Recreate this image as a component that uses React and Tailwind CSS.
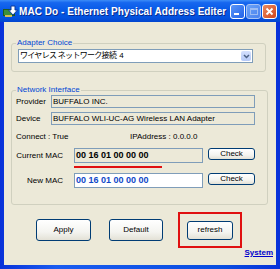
import React from 'react';

const btn =
  'flex items-center justify-center rounded-[3px] border border-[#003C74] bg-[linear-gradient(to_bottom,#ffffff_0%,#f4f4f0_60%,#e3e1d6_100%)] text-[8px] text-black leading-none';

function TitleIcon() {
  return (
    <svg width="15" height="13" viewBox="0 0 15 13">
      <rect x="0.5" y="4.5" width="11" height="6" fill="#3c8f3c" stroke="#1e5a1e" />
      <rect x="2" y="10" width="7" height="2" fill="#d8c050" />
      <path d="M8 1h4v4h2.5l-4.5 5-4.5-5H8z" fill="#ffffff" stroke="#0b3a9c" strokeWidth="1" />
    </svg>
  );
}

function Chevron() {
  return (
    <svg width="7" height="5" viewBox="0 0 7 5">
      <path d="M1 1l2.5 2.5L6 1" fill="none" stroke="#4d6185" strokeWidth="1.5" />
    </svg>
  );
}

export default function App() {
  return (
    <div className="w-[280px] h-[269px] flex flex-col bg-[linear-gradient(to_right,#0831d9,#1a5cf0_20%,#0a4ee0_80%,#0831d9)] font-['Liberation_Sans','Noto_Sans_CJK_JP',sans-serif] overflow-hidden">
      {/* Title bar */}
      <div className="h-[22px] flex items-center pl-[3px] pr-[3px] bg-[linear-gradient(to_bottom,#3d8df7_0%,#1767ef_12%,#0558e6_50%,#0452df_80%,#0345cf_100%)]">
        <TitleIcon />
        <span className="ml-[1px] text-[10px] font-bold text-white tracking-[0.05px] [text-shadow:1px_1px_0_#0a2a8a] whitespace-nowrap">
          MAC Do - Ethernet Physical Address Editer
        </span>
        <div className="ml-auto flex gap-[1px]">
          <div className="w-[15px] h-[15px] rounded-[3px] border border-white bg-[linear-gradient(135deg,#5a96f8,#2263e8)] flex items-end pl-[3px] pb-[3px]">
            <div className="w-[5px] h-[2px] bg-white" />
          </div>
          <div className="w-[15px] h-[15px] rounded-[3px] border border-[#a9c4f5] bg-[linear-gradient(135deg,#6aa2f7,#4a82ee)] flex items-center justify-center">
            <div className="w-[8px] h-[7px] border border-[#9dbcf3] border-t-2" />
          </div>
          <div className="w-[15px] h-[15px] rounded-[3px] border border-white bg-[linear-gradient(135deg,#e98a5f,#d2461c)] flex items-center justify-center">
            <svg width="9" height="9" viewBox="0 0 9 9">
              <path d="M1.5 1.5l6 6M7.5 1.5l-6 6" stroke="#ffffff" strokeWidth="1.8" />
            </svg>
          </div>
        </div>
      </div>

      {/* Client area */}
      <div className="flex-1 mx-[4px] mb-[4px] bg-[#ECE9D8] flex flex-col text-[8px] text-black">
        {/* Adapter Choice */}
        <fieldset className="mt-[16px] ml-[7px] mr-[10px] border border-[#D0D0BF] rounded-[3px] pl-[6px] pr-[12px] pb-[8px]">
          <legend className="ml-[-2px] px-[1px] leading-[10px] text-[8px] text-[#0046D5]">Adapter Choice</legend>
          <div className="mt-[1px] h-[14px] flex items-stretch border border-[#7F9DB9] bg-white">
            <span className="flex-1 pl-[1px] leading-[12px] text-[8px] tracking-[-0.7px] whitespace-pre">
              ワイヤレス ネットワーク接続  4
            </span>
            <div className="w-[10px] m-px rounded-[2px] bg-[linear-gradient(to_bottom,#d4e0fd,#b5c9f7)] flex items-center justify-center">
              <Chevron />
            </div>
          </div>
        </fieldset>

        {/* Network Interface */}
        <fieldset className="mt-[13px] ml-[7px] mr-[9px] border border-[#D0D0BF] rounded-[3px] pl-[4px] pr-[12px] pb-[16px]">
          <legend className="px-[1px] leading-[10px] text-[8px] text-[#0046D5]">Network Interface</legend>
          <div className="flex items-center h-[13px]">
            <span className="w-[35px]">Provider</span>
            <div className="flex-1 h-full border border-[#7F9DB9] bg-[#ECE9D8] pl-[1px] leading-[11px]">BUFFALO INC.</div>
          </div>
          <div className="mt-[4px] flex items-center h-[13px]">
            <span className="w-[35px]">Device</span>
            <div className="flex-1 h-full border border-[#7F9DB9] bg-[#ECE9D8] pl-[1px] leading-[11px] whitespace-nowrap">
              BUFFALO WLI-UC-AG Wireless LAN Adapter
            </div>
          </div>
          <div className="mt-[6px] flex items-center h-[12px]">
            <span className="w-[114px]">Connect : True</span>
            <span>IPAddress : 0.0.0.0</span>
          </div>
          <div className="mt-[5px] flex items-start">
            <span className="w-[58px] pr-[11px] text-right leading-[15px]">Current MAC</span>
            <div className="w-[129px] h-[15px] border border-[#7F9DB9] bg-[#ECE9D8] pl-[1px] text-[9px] font-bold leading-[13px] whitespace-nowrap">
              00 16 01 00 00 00
            </div>
            <button className={`${btn} ml-[5px] w-[47px] h-[12px]`}>Check</button>
          </div>
          <div className="mt-[3px] ml-[58px] w-[88px] h-[2px] bg-[#e01010]" />
          <div className="mt-[5px] flex items-start">
            <span className="w-[58px] pr-[11px] text-right leading-[15px]">New MAC</span>
            <div className="w-[129px] h-[15px] border border-[#7F9DB9] bg-white pl-[1px] text-[9px] font-bold text-[#1048c8] leading-[13px] whitespace-nowrap">
              00 16 01 00 00 00
            </div>
            <button className={`${btn} ml-[5px] w-[47px] h-[12px]`}>Check</button>
          </div>
        </fieldset>

        {/* Buttons */}
        <div className="mt-[7px] flex items-center pl-[32px]">
          <button className={`${btn} w-[55px] h-[22px]`}>Apply</button>
          <button className={`${btn} ml-[18px] w-[54px] h-[22px]`}>Default</button>
          <div className="ml-[15px] w-[64px] h-[36px] border-2 border-[#e01010] flex items-center justify-center">
            <button className={`${btn} w-[46px] h-[19px]`}>refresh</button>
          </div>
        </div>
        <div className="flex justify-end pr-[3px] leading-[10px]">
          <span className="font-bold text-[#0000cc] underline">System</span>
        </div>
      </div>
    </div>
  );
}
